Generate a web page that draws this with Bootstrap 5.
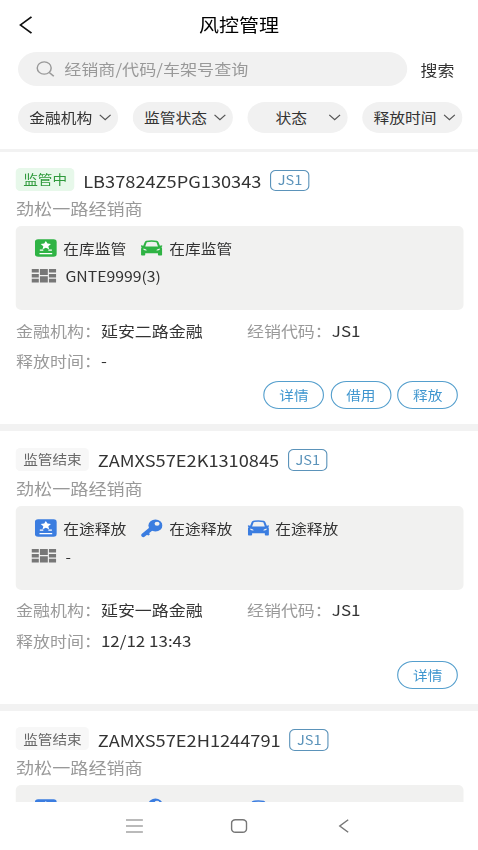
<!DOCTYPE html>
<html lang="zh-CN">
<head>
<meta charset="utf-8">
<meta name="viewport" content="width=device-width, initial-scale=1">
<title>风控管理</title>
<link href="https://cdn.jsdelivr.net/npm/bootstrap@5.3.0/dist/css/bootstrap.min.css" rel="stylesheet">
<style>
body{background:#fff;overflow:hidden;font-family:"Noto Sans CJK SC",sans-serif;color:#333}
.screen{width:424.89px;height:850px;transform:scaleX(1.125);transform-origin:0 0;overflow:hidden;line-height:1;white-space:nowrap}
svg{display:block;flex:none}
.topbar{height:52px;padding:0 16px 3px}
.topbar h1{font-size:17.8px;font-weight:400;color:#000}
.side{width:14px}
.searchrow{padding:0 16px;height:34px}
.searchbox{width:346px;height:34px;background:#f1f1f1;color:#999;font-size:15.2px;padding-left:16px}
.searchgo{font-size:15px;color:#333;margin-right:5px}
.filters{padding:15.5px 14px 0 16px;height:62.5px;gap:13.1px}
.pill{width:89px;height:31px;background:#f1f1f1;font-size:14px;padding:0 6px 0 10px}
.cards{height:653.5px;overflow:hidden}
.entry{height:279.75px;border-top:7.5px solid #f2f2f2;padding:16.3px 12.5px 0 14.2px}
.entry:first-child{border-top-width:3.5px;height:275.75px}
.line1{height:23px}
.state{height:23px;border-radius:4px;padding:0 6.4px 1px;font-size:13px;background:#f7f7f7;color:#666}
.state.on{background:#e7f8ea;color:#2f9a3c}
.vin{font-size:16.2px;margin:3px 0 0 8px}
.code{width:35px;height:21.5px;border:1px solid #5b93ba;border-radius:5px;color:#5b93ba;font-size:13px;margin:2px 0 0 8px;padding-bottom:1px}
.dealer{height:35px;font-size:16.1px;color:#999;padding-bottom:1px}
.infobox{height:84px;width:398.200px;background:#f1f1f0;border-radius:5px;padding:8.5px 14px 0}
.irow{height:28px;font-size:14px}
.irow span{padding-bottom:1px}
.item{width:94.2px;padding-left:3px;gap:5.600px}
.facts{height:64px;padding-top:5px;font-size:15.1px}
.facts>div{height:30.7px}
.facts .k{color:#999;width:75.500px}
.facts .half{width:205.3px}
.acts{gap:5.2px;padding-right:5px;margin-top:7px}
.act{width:54.3px;height:28.5px;border:1px solid #559fcd;border-radius:15px;color:#3f96cf;font-size:13px;padding-bottom:1px}
.sysnav{height:48px;background:#fff;color:#777}
.sysnav svg{margin:0 39.2px}
.g{color:#2fb344}.b{color:#3b7de0}
</style>
</head>
<body>
<svg width="0" height="0" class="position-absolute">
<symbol id="cert" viewBox="0 0 20 18"><rect x="0" y="0" width="20" height="18" rx="3" fill="currentColor"/><path fill="#fff" d="M10 1.800l1.500 2.700 3.200.5-2.400 2.100.7 3.100L10 8.700 7 10.200l.7-3.100L5.300 5l3.200-.5zM4.500 10.600h3.200v1.200H4.500zM12.300 10.600h3.200v1.200h-3.200zM4.200 14h11.600v1.300H4.200z"/></symbol>
<symbol id="car" viewBox="0 0 20 16"><path fill="currentColor" fill-rule="evenodd" d="M5.200 0.500Q10-.5 14.800.500 15.800.800 16.200 1.800L17.600 5.600 19.600 5.200Q20.400 6.300 19 7 19.600 7.800 19.600 9V14.800Q19.600 15.600 18.800 15.600H16.600Q15.800 15.600 15.800 14.800V13.500H4.200V14.800Q4.200 15.600 3.400 15.600H1.200Q.4 15.600.4 14.800V9Q.4 7.800 1 7-.4 6.300.4 5.200L2.400 5.600 3.800 1.800Q4.200.800 5.200.5ZM5.600 2L4.200 6.400H15.800L14.400 2Q10 1.200 5.600 2ZM2.600 8.600V9.800Q4 10.800 5.800 10.400 5 9 2.600 8.600ZM17.400 8.600V9.800Q16 10.800 14.200 10.400 15 9 17.400 8.600Z"/></symbol>
<symbol id="key" viewBox="0 0 20 19"><path fill="none" stroke="currentColor" stroke-width="4" stroke-linecap="round" d="M10 9.500L2.500 16.300"/><path fill="none" stroke="currentColor" stroke-width="2.600" stroke-linecap="round" d="M5.500 13.800l1.500 1.400"/><ellipse cx="13.500" cy="6.400" rx="6.400" ry="6.100" fill="currentColor"/><ellipse cx="15" cy="4.700" rx="2.300" ry="2.100" fill="#f1f1f0"/></symbol>
<symbol id="grid" viewBox="0 0 22 14"><path fill="#777" d="M0 0h6.500v3.500H0zM7.500 0h7v6h-7zM15.500 0H22v3.500h-6.500zM0 4.900h6.500v3.500H0zM15.500 4.900H22v3.500h-6.500zM0 9.800h6.500v3.700H0zM7.500 7.300h7v6.200h-7zM15.500 9.800H22v3.700h-6.500z"/></symbol>
<symbol id="chev" viewBox="0 0 11 7"><path d="M.7.8L5.500 5.600 10.300.8" fill="none" stroke="#555" stroke-width="1.1"/></symbol>
</svg>
<div class="screen d-flex flex-column">
<header class="topbar d-flex align-items-center justify-content-between flex-shrink-0">
<svg class="side" width="12" height="18" viewBox="0 0 12 18"><path d="M11 .8L1.200 9 11 17.200" fill="none" stroke="#111" stroke-width="1.600"/></svg>
<h1 class="m-0">风控管理</h1><span class="side"></span>
</header>
<div class="searchrow d-flex align-items-center flex-shrink-0">
<div class="searchbox rounded-pill d-flex align-items-center">
<svg width="17" height="16" viewBox="0 0 17 16"><circle cx="7.300" cy="7" r="6.200" fill="none" stroke="#999" stroke-width="1.300"/><path d="M11.800 11.500l4 3.800" stroke="#999" stroke-width="1.400"/></svg>
<span class="ms-2">经销商/代码/车架号查询</span></div>
<span class="searchgo ms-auto">搜索</span>
</div>
<div class="filters d-flex flex-shrink-0">
<div class="pill rounded-pill d-flex align-items-center justify-content-between"><span>金融机构</span><svg width="11" height="7"><use href="#chev"/></svg></div>
<div class="pill rounded-pill d-flex align-items-center justify-content-between"><span>监管状态</span><svg width="11" height="7"><use href="#chev"/></svg></div>
<div class="pill rounded-pill d-flex align-items-center justify-content-between"><span class="flex-fill text-center pe-1">状态</span><svg width="11" height="7"><use href="#chev"/></svg></div>
<div class="pill rounded-pill d-flex align-items-center justify-content-between"><span>释放时间</span><svg width="11" height="7"><use href="#chev"/></svg></div>
</div>
<main class="cards flex-shrink-0">
<section class="entry">
<div class="line1 d-flex align-items-center"><span class="state on d-flex align-items-center">监管中</span><span class="vin">LB37824Z5PG130343</span><span class="code d-flex align-items-center justify-content-center">JS1</span></div>
<div class="dealer d-flex align-items-center">劲松一路经销商</div>
<div class="infobox">
<div class="irow d-flex align-items-center"><div class="item d-flex align-items-center"><svg class="g" width="19.500" height="18"><use href="#cert"/></svg><span>在库监管</span></div><div class="item d-flex align-items-center"><svg class="g" width="19.500" height="16"><use href="#car"/></svg><span>在库监管</span></div></div>
<div class="irow d-flex align-items-center"><svg width="22" height="14"><use href="#grid"/></svg><span class="ms-2">GNTE9999(3)</span></div>
</div>
<div class="facts"><div class="d-flex align-items-center"><span class="half d-flex"><span class="k">金融机构：</span>延安二路金融</span><span class="k">经销代码：</span>JS1</div><div class="d-flex align-items-center"><span class="k">释放时间：</span>-</div></div>
<div class="acts d-flex justify-content-end"><span class="act d-flex align-items-center justify-content-center">详情</span><span class="act d-flex align-items-center justify-content-center">借用</span><span class="act d-flex align-items-center justify-content-center">释放</span></div>
</section>
<section class="entry">
<div class="line1 d-flex align-items-center"><span class="state d-flex align-items-center">监管结束</span><span class="vin">ZAMXS57E2K1310845</span><span class="code d-flex align-items-center justify-content-center">JS1</span></div>
<div class="dealer d-flex align-items-center">劲松一路经销商</div>
<div class="infobox">
<div class="irow d-flex align-items-center"><div class="item d-flex align-items-center"><svg class="b" width="19.500" height="18"><use href="#cert"/></svg><span>在途释放</span></div><div class="item d-flex align-items-center"><svg class="b" width="19.500" height="19"><use href="#key"/></svg><span>在途释放</span></div><div class="item d-flex align-items-center"><svg class="b" width="19.500" height="16"><use href="#car"/></svg><span>在途释放</span></div></div>
<div class="irow d-flex align-items-center"><svg width="22" height="14"><use href="#grid"/></svg><span class="ms-2">-</span></div>
</div>
<div class="facts"><div class="d-flex align-items-center"><span class="half d-flex"><span class="k">金融机构：</span>延安一路金融</span><span class="k">经销代码：</span>JS1</div><div class="d-flex align-items-center"><span class="k">释放时间：</span>12/12 13:43</div></div>
<div class="acts d-flex justify-content-end"><span class="act d-flex align-items-center justify-content-center">详情</span></div>
</section>
<section class="entry">
<div class="line1 d-flex align-items-center"><span class="state d-flex align-items-center">监管结束</span><span class="vin">ZAMXS57E2H1244791</span><span class="code d-flex align-items-center justify-content-center">JS1</span></div>
<div class="dealer d-flex align-items-center">劲松一路经销商</div>
<div class="infobox">
<div class="irow d-flex align-items-center"><div class="item"><svg class="b" width="19.500" height="18"><use href="#cert"/></svg></div><div class="item"><svg class="b" width="19.500" height="19"><use href="#key"/></svg></div><div class="item"><svg class="b" width="19.500" height="16"><use href="#car"/></svg></div></div>
</div>
</section>
</main>
<nav class="sysnav d-flex align-items-center justify-content-center flex-shrink-0">
<svg width="15" height="14" viewBox="0 0 15 14"><path d="M0 1h15M0 7h15M0 13h15" stroke="currentColor" stroke-width="1.200"/></svg>
<svg width="15" height="14" viewBox="0 0 15 14"><rect x=".8" y=".8" width="13.400" height="12.400" rx="3.500" fill="none" stroke="currentColor" stroke-width="1.400"/></svg>
<svg width="15" height="14" viewBox="0 0 15 14"><path d="M11.500 .8L4 7 11.500 13.200" fill="none" stroke="currentColor" stroke-width="1.300"/></svg>
</nav>
</div>
<script src="https://cdn.jsdelivr.net/npm/bootstrap@5.3.0/dist/js/bootstrap.bundle.min.js"></script>
</body>
</html>
